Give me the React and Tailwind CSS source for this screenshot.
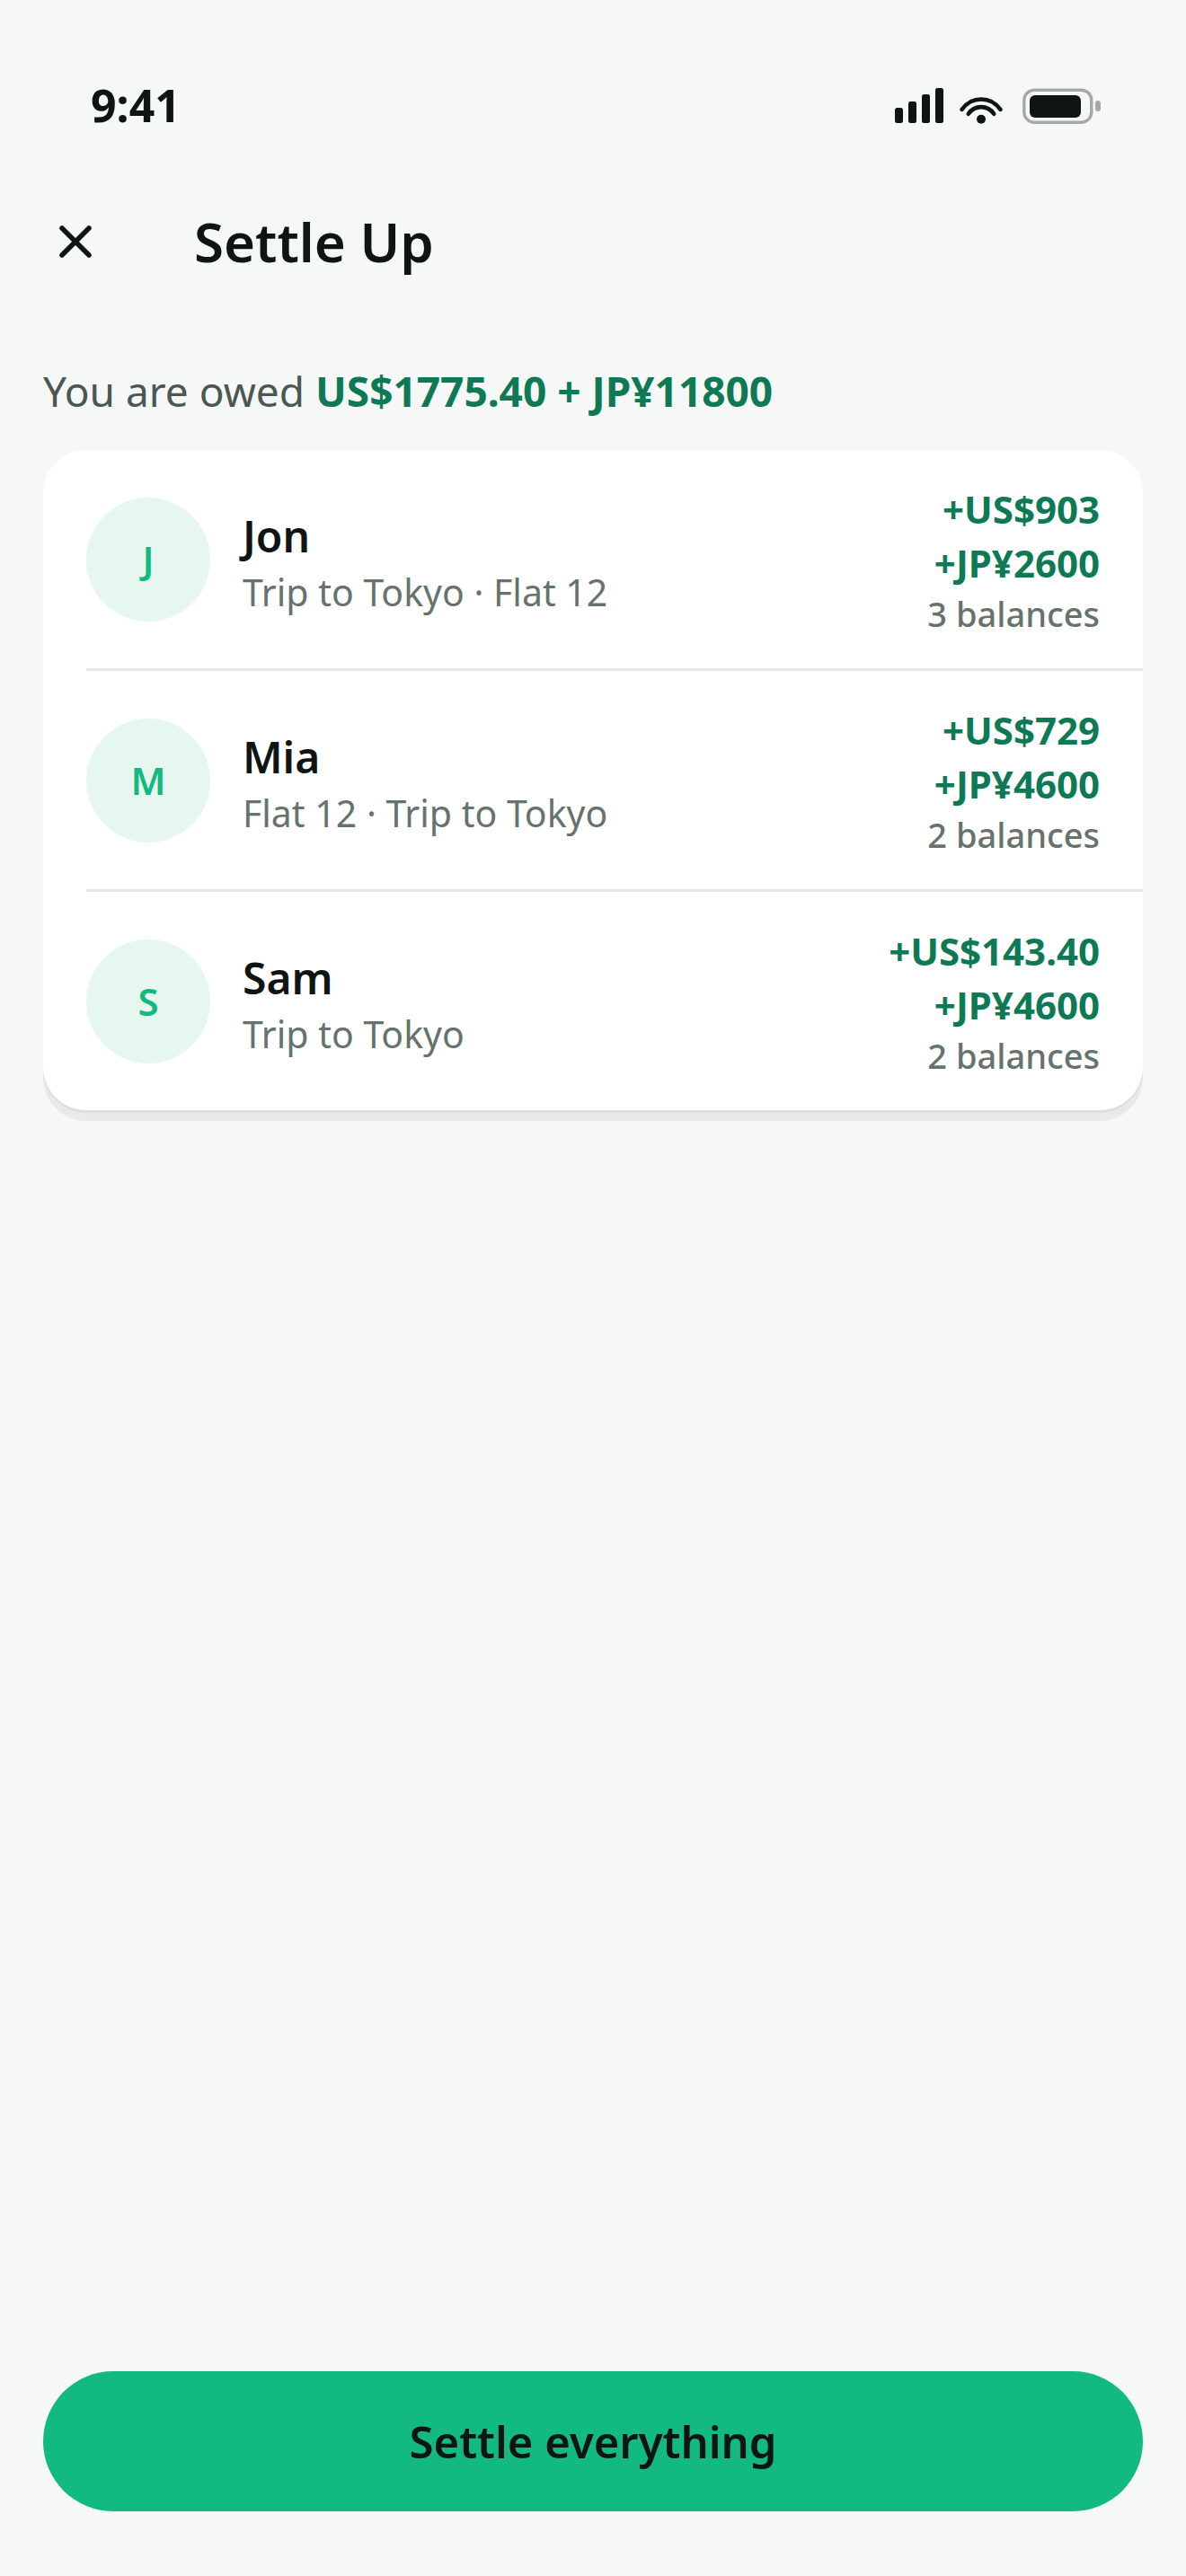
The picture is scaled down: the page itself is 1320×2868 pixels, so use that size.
const people = [
  { name: 'Jon', groups: 'Trip to Tokyo · Flat 12', amounts: ['+US$903', '+JP¥2600'], balances: 3 },
  { name: 'Mia', groups: 'Flat 12 · Trip to Tokyo', amounts: ['+US$729', '+JP¥4600'], balances: 2 },
  { name: 'Sam', groups: 'Trip to Tokyo', amounts: ['+US$143.40', '+JP¥4600'], balances: 2 },
];

const StatusBar = () => (
  <div className="flex items-center justify-between pt-[81px] pb-[33px] pl-[101px] pr-[94px]">
    <span className="text-[50px] leading-[72px] font-bold">9:41</span>
    <div className="flex items-center">
      {/* Signal */}
      <svg width="54" height="40" viewBox="0 0 54 40" fill="currentColor" aria-hidden="true">
        <rect x="0" y="23" width="9" height="17" rx="2.5" />
        <rect x="15" y="16" width="9" height="24" rx="2.5" />
        <rect x="30" y="8" width="9" height="32" rx="2.5" />
        <rect x="45" y="1" width="9" height="39" rx="2.5" />
      </svg>
      {/* Wifi */}
      <svg className="ml-[18px]" width="48" height="42" viewBox="0 0 48 42" fill="none" stroke="currentColor" strokeWidth="4.6" strokeLinecap="round" aria-hidden="true">
        <path d="M2.6 25.8C13.6 10.8 34.4 10.8 45.4 25.8" />
        <path d="M9.8 30.8C16.8 20.6 31.2 20.6 38.2 30.8" />
        <circle cx="24" cy="36.8" r="5" fill="currentColor" stroke="none" />
      </svg>
      {/* Battery */}
      <svg className="ml-[22px]" width="88" height="42" viewBox="0 0 88 42" fill="none" aria-hidden="true">
        <rect x="1.8" y="4.2" width="75" height="36" rx="11.5" stroke="#0f1513" strokeOpacity="0.35" strokeWidth="3.4" />
        <rect x="8" y="10" width="57" height="25" rx="6" fill="#0f1513" />
        <rect x="81" y="16" width="6" height="12" rx="3" fill="#0f1513" fillOpacity="0.35" />
      </svg>
    </div>
  </div>
);

const PersonRow = ({ person }) => (
  <li className="group pl-12">
    <div className="flex items-center gap-9 min-h-[243px] pr-12 box-content border-[#e3e8e6] group-not-last:border-b-3">
      <div className="flex items-center justify-center shrink-0 size-[138px] rounded-full bg-[#e6f7f0] text-[#12b981] text-[42px] leading-[60px] font-semibold">
        {person.name[0]}
      </div>
      <div className="flex-1 min-w-0">
        <p className="text-[48px] leading-[72px] font-semibold">{person.name}</p>
        <p className="text-[41px] leading-[52px] text-[#66736d]">{person.groups}</p>
      </div>
      <div className="text-right">
        {person.amounts.map(amount => (
          <p key={amount} className="text-[42px] leading-[60px] font-bold text-[#0e7a55]">{amount}</p>
        ))}
        <p className="text-[38px] leading-[52px] font-medium text-[#66736d]">{person.balances} balances</p>
      </div>
    </div>
  </li>
);

export default function App() {
  return (
    <div className="flex flex-col min-h-screen bg-[#f5f8f7] text-[#0f1513] font-['Noto_Sans',sans-serif]">
      <StatusBar />

      <header className="flex items-center gap-24 h-[166px] px-12">
        <button type="button" aria-label="Close" className="flex items-center justify-center size-[72px]">
          <svg width="36" height="36" viewBox="0 0 36 36" fill="none" stroke="currentColor" strokeWidth="5.5" strokeLinecap="round">
            <path d="M3 3l30 30M33 3L3 33" />
          </svg>
        </button>
        <h1 className="text-[60px] leading-[84px] font-semibold">Settle Up</h1>
      </header>

      <main className="flex-1 px-12 pt-[50px]">
        <p className="mb-[33px] text-[46px] leading-[66px] text-[#4b5751]">
          You are owed <span className="font-bold text-[#0e7a55]">US$1775.40 + JP¥11800</span>
        </p>
        <ul className="rounded-[48px] bg-white shadow-[0_3px_0_rgba(15,21,19,0.05),0_12px_0_rgba(15,21,19,0.06)]">
          {people.map(person => (
            <PersonRow key={person.name} person={person} />
          ))}
        </ul>
      </main>

      <footer className="px-12 pb-[72px]">
        <button type="button" className="w-full h-[156px] rounded-full bg-[#12b981] text-[49px] leading-[72px] font-semibold">
          Settle everything
        </button>
      </footer>
    </div>
  );
}
